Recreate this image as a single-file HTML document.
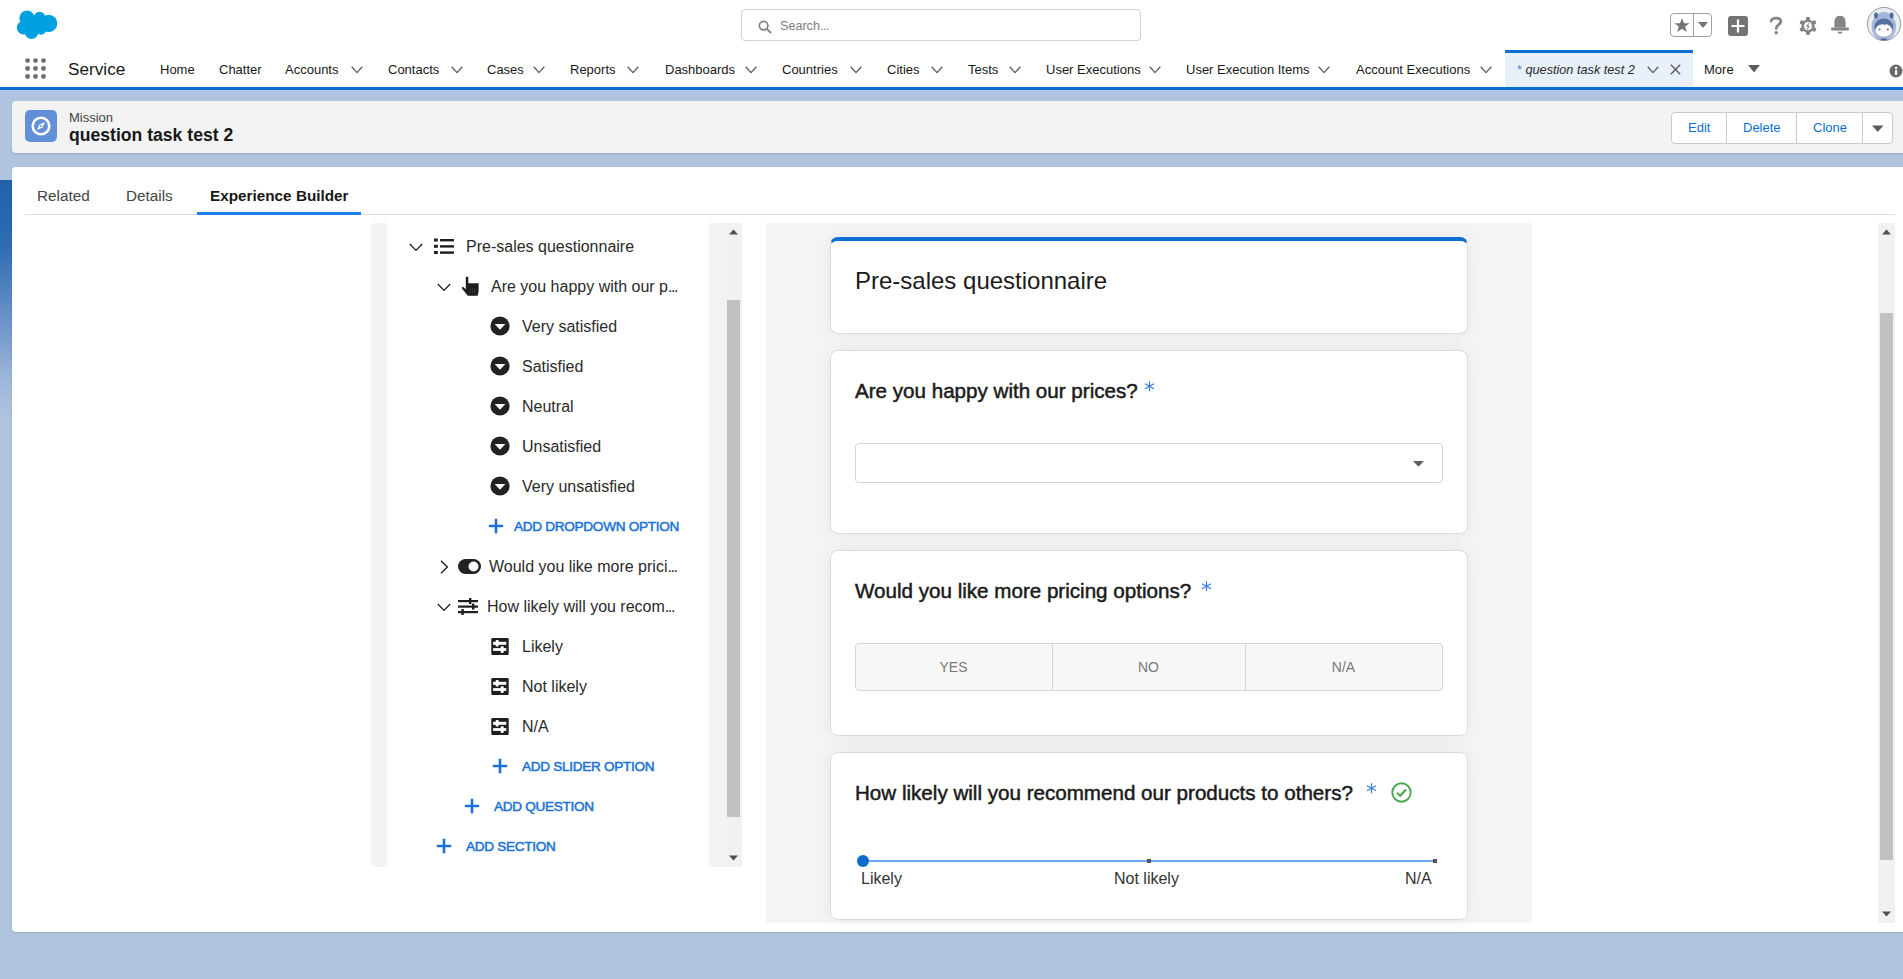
<!DOCTYPE html>
<html><head><meta charset="utf-8">
<style>
*{box-sizing:border-box;margin:0;padding:0}
html,body{width:1903px;height:979px;overflow:hidden}
body{position:relative;background:#b0c4df;font-family:"Liberation Sans",sans-serif;color:#181818}
.a{position:absolute;white-space:nowrap}
#hdr{position:absolute;left:0;top:0;width:1903px;height:87px;background:#fff}
#bline{position:absolute;left:0;top:87px;width:1903px;height:3px;background:#0b6fd4}
#leftimg{position:absolute;left:0;top:180px;width:40px;height:240px;background:linear-gradient(#2261a9 0%,#2f6cb2 28%,#6a92c8 58%,#9bb5d9 82%,#b0c4df 100%)}
.nav{position:absolute;top:61px;font-size:13px;color:#181818;line-height:18px}
.chev{position:absolute;top:66px}
#rec{position:absolute;left:12px;top:101px;width:1900px;height:52px;background:#f3f3f3;border-radius:4px;box-shadow:0 1px 2px rgba(0,0,0,.12)}
#main{position:absolute;left:12px;top:167px;width:1900px;height:765px;background:#fff;border-radius:4px 4px 4px 4px;box-shadow:0 1px 2px rgba(0,0,0,.12)}
.tab{position:absolute;top:186px;font-size:15.3px;line-height:20px;color:#444}
.tr{position:absolute;font-size:16px;color:#2a2a2a;line-height:22px}
.add{position:absolute;padding-top:1px;font-size:13.6px;letter-spacing:-0.3px;color:#1a73d4;line-height:18px;-webkit-text-stroke:0.5px #1a73d4}
.card{position:absolute;left:830px;width:638px;background:#fff;border:1px solid #dcdcdc;border-radius:8px}
.q{position:absolute;left:855px;font-size:20.6px;color:#1b1b1b;line-height:24px;-webkit-text-stroke:0.5px #1b1b1b}
.ast{color:#3577d8;font-weight:normal;font-size:20px}
</style></head><body>
<div id="hdr"></div>
<div id="bline"></div>
<div id="leftimg"></div>

<!-- logo -->
<svg class="a" style="left:0;top:0" width="70" height="45" viewBox="0 0 70 45"><g fill="#00a1e0">
<circle cx="27" cy="18.2" r="7.6"/><circle cx="39.5" cy="17.6" r="5.9"/><circle cx="48.7" cy="23.4" r="8.6"/><circle cx="23.6" cy="27.6" r="6.8"/><circle cx="31.5" cy="32.1" r="6.8"/><circle cx="41" cy="29.2" r="5.5"/><ellipse cx="36" cy="25" rx="13" ry="8"/>
</g></svg>

<!-- search -->
<div class="a" style="left:741px;top:9px;width:400px;height:32px;border:1px solid #d2d2d2;border-radius:4px;background:#fff"></div>
<svg class="a" style="left:758px;top:20px" width="14" height="14" viewBox="0 0 14 14"><circle cx="5.6" cy="5.6" r="4.3" fill="none" stroke="#808080" stroke-width="1.7"/><path d="M8.8 8.8 L13 13" stroke="#808080" stroke-width="1.9"/></svg>
<div class="a" style="left:780px;top:17px;font-size:12.6px;color:#7d7d7d;line-height:18px">Search<span style="letter-spacing:-0.6px">...</span></div>

<!-- header right icons -->
<div class="a" style="left:1670px;top:13px;width:42px;height:24px;border:1px solid #a0a0a0;border-radius:4px;background:#fff"></div>
<div class="a" style="left:1693px;top:13px;width:1px;height:24px;background:#a0a0a0"></div>
<svg class="a" style="left:1674px;top:17px" width="16" height="16" viewBox="0 0 16 16"><path d="M8 1 L10 6.2 L15.5 6.3 L11.2 9.6 L12.8 15 L8 11.8 L3.2 15 L4.8 9.6 L0.5 6.3 L6 6.2 Z" fill="#747474"/></svg>
<svg class="a" style="left:1698px;top:22px" width="10" height="6" viewBox="0 0 10 6"><path d="M0 0 L10 0 L5 6 Z" fill="#747474"/></svg>
<div class="a" style="left:1728px;top:16px;width:20px;height:20px;border-radius:3px;background:#747474"></div>
<svg class="a" style="left:1728px;top:16px" width="20" height="20" viewBox="0 0 20 20"><path d="M10 3.5 V16.5 M3.5 10 H16.5" stroke="#fff" stroke-width="2.2"/></svg>
<svg class="a" style="left:1768px;top:15px" width="16" height="20" viewBox="0 0 16 20"><path d="M3.2 6.2 C3.2 2.4 12.8 1.6 12.8 6.4 C12.8 9.6 8.2 9.8 8.2 13.6" fill="none" stroke="#858585" stroke-width="2.8" stroke-linecap="round"/><rect x="6.6" y="16.2" width="3.2" height="3" rx="0.8" fill="#858585"/></svg>
<svg class="a" style="left:1799px;top:17px" width="18" height="18" viewBox="0 0 18 18"><g fill="#858585"><rect x="7" y="0" width="4" height="4" rx="1.4" transform="rotate(0 9 9)"/><rect x="7" y="0" width="4" height="4" rx="1.4" transform="rotate(60 9 9)"/><rect x="7" y="0" width="4" height="4" rx="1.4" transform="rotate(120 9 9)"/><rect x="7" y="0" width="4" height="4" rx="1.4" transform="rotate(180 9 9)"/><rect x="7" y="0" width="4" height="4" rx="1.4" transform="rotate(240 9 9)"/><rect x="7" y="0" width="4" height="4" rx="1.4" transform="rotate(300 9 9)"/><circle cx="9" cy="9" r="6.6"/></g><circle cx="9" cy="9" r="3.9" fill="#fff"/><path d="M9.9 6.3 L7.9 9.3 H9.8 L8.4 11.9" fill="none" stroke="#858585" stroke-width="1.1"/></svg>
<svg class="a" style="left:1830px;top:15px" width="20" height="20" viewBox="0 0 20 20"><path d="M10 0.8 C5.6 0.8 4.4 4.2 4.4 8.2 V12.6 H15.6 V8.2 C15.6 4.2 14.4 0.8 10 0.8 Z" fill="#858585"/><rect x="1" y="12.6" width="18" height="2.8" rx="1.2" fill="#858585"/><path d="M7.6 16.8 H12.4 A2.4 2 0 0 1 7.6 16.8 Z" fill="#858585"/></svg>
<svg class="a" style="left:1867px;top:7px" width="34" height="34" viewBox="0 0 34 34"><defs><clipPath id="avc"><circle cx="17" cy="17" r="16.6"/></clipPath></defs><circle cx="17" cy="17" r="16.6" fill="#e9edf4"/><g clip-path="url(#avc)"><ellipse cx="16.8" cy="19.5" rx="12.2" ry="14.5" fill="#a4b7d6"/><ellipse cx="9" cy="8.6" rx="1.9" ry="3" fill="#51699a"/><ellipse cx="24.6" cy="8.6" rx="1.9" ry="3" fill="#51699a"/><ellipse cx="16.8" cy="20" rx="9.4" ry="8.4" fill="#5470a0"/><ellipse cx="16.8" cy="23.2" rx="8.3" ry="6.4" fill="#fff"/><path d="M8.6 20 Q10 15 13 16 L14 18.6 L15.6 15.8 L17.2 18.4 Q21 15 25 19.5 L25 17 Q20 11 12 14 Z" fill="#5470a0"/><circle cx="12.6" cy="22.6" r="1" fill="#5470a0"/><circle cx="20.8" cy="22.6" r="1" fill="#5470a0"/><ellipse cx="16.8" cy="33.2" rx="3.4" ry="2" fill="#51699a"/></g><circle cx="17" cy="17" r="16.6" fill="none" stroke="#8e8e8e" stroke-width="0.9"/></svg>

<!-- app launcher + Service -->
<svg class="a" style="left:25px;top:58px" width="22" height="22" viewBox="0 0 22 22"><g fill="#706e6b"><circle cx="2.6" cy="2.6" r="2.4"/><circle cx="10.5" cy="2.6" r="2.4"/><circle cx="18.5" cy="2.6" r="2.4"/><circle cx="2.6" cy="10.5" r="2.4"/><circle cx="10.5" cy="10.5" r="2.4"/><circle cx="18.5" cy="10.5" r="2.4"/><circle cx="2.6" cy="18.5" r="2.4"/><circle cx="10.5" cy="18.5" r="2.4"/><circle cx="18.5" cy="18.5" r="2.4"/></g></svg>
<div class="a" style="left:68px;top:58px;font-size:17.2px;line-height:22px;color:#181818">Service</div>

<!-- NAV -->
<div class="nav" style="left:160px">Home</div>
<div class="nav" style="left:219px">Chatter</div>
<div class="nav" style="left:285px">Accounts</div>
<svg class="chev" style="left:351px" width="12" height="8" viewBox="0 0 12 8"><path d="M0.7 0.8 L6 6.6 L11.3 0.8" fill="none" stroke="#5c5c5c" stroke-width="1.3"/></svg>
<div class="nav" style="left:388px">Contacts</div>
<svg class="chev" style="left:451px" width="12" height="8" viewBox="0 0 12 8"><path d="M0.7 0.8 L6 6.6 L11.3 0.8" fill="none" stroke="#5c5c5c" stroke-width="1.3"/></svg>
<div class="nav" style="left:487px">Cases</div>
<svg class="chev" style="left:533px" width="12" height="8" viewBox="0 0 12 8"><path d="M0.7 0.8 L6 6.6 L11.3 0.8" fill="none" stroke="#5c5c5c" stroke-width="1.3"/></svg>
<div class="nav" style="left:570px">Reports</div>
<svg class="chev" style="left:627px" width="12" height="8" viewBox="0 0 12 8"><path d="M0.7 0.8 L6 6.6 L11.3 0.8" fill="none" stroke="#5c5c5c" stroke-width="1.3"/></svg>
<div class="nav" style="left:665px">Dashboards</div>
<svg class="chev" style="left:745px" width="12" height="8" viewBox="0 0 12 8"><path d="M0.7 0.8 L6 6.6 L11.3 0.8" fill="none" stroke="#5c5c5c" stroke-width="1.3"/></svg>
<div class="nav" style="left:782px">Countries</div>
<svg class="chev" style="left:850px" width="12" height="8" viewBox="0 0 12 8"><path d="M0.7 0.8 L6 6.6 L11.3 0.8" fill="none" stroke="#5c5c5c" stroke-width="1.3"/></svg>
<div class="nav" style="left:887px">Cities</div>
<svg class="chev" style="left:931px" width="12" height="8" viewBox="0 0 12 8"><path d="M0.7 0.8 L6 6.6 L11.3 0.8" fill="none" stroke="#5c5c5c" stroke-width="1.3"/></svg>
<div class="nav" style="left:968px">Tests</div>
<svg class="chev" style="left:1009px" width="12" height="8" viewBox="0 0 12 8"><path d="M0.7 0.8 L6 6.6 L11.3 0.8" fill="none" stroke="#5c5c5c" stroke-width="1.3"/></svg>
<div class="nav" style="left:1046px">User Executions</div>
<svg class="chev" style="left:1149px" width="12" height="8" viewBox="0 0 12 8"><path d="M0.7 0.8 L6 6.6 L11.3 0.8" fill="none" stroke="#5c5c5c" stroke-width="1.3"/></svg>
<div class="nav" style="left:1186px">User Execution Items</div>
<svg class="chev" style="left:1318px" width="12" height="8" viewBox="0 0 12 8"><path d="M0.7 0.8 L6 6.6 L11.3 0.8" fill="none" stroke="#5c5c5c" stroke-width="1.3"/></svg>
<div class="nav" style="left:1356px">Account Executions</div>
<svg class="chev" style="left:1480px" width="12" height="8" viewBox="0 0 12 8"><path d="M0.7 0.8 L6 6.6 L11.3 0.8" fill="none" stroke="#5c5c5c" stroke-width="1.3"/></svg>
<!--NAVEND-->
<!-- active tab -->
<div class="a" style="left:1505px;top:50px;width:188px;height:37px;background:#e8f0fa;border-top:3px solid #0b6fd4"></div>
<div class="a" style="left:1517px;top:61px;font-size:12.7px;line-height:18px;color:#2b2b2b;font-style:italic"><span style="color:#3c8ee6;font-style:normal">*</span> question task test 2</div>
<svg class="a" style="left:1647px;top:66px" width="12" height="8" viewBox="0 0 12 8"><path d="M0.7 0.8 L6 6.6 L11.3 0.8" fill="none" stroke="#5c5c5c" stroke-width="1.3"/></svg>
<svg class="a" style="left:1670px;top:64px" width="11" height="11" viewBox="0 0 11 11"><path d="M0.8 0.8 L10.2 10.2 M10.2 0.8 L0.8 10.2" stroke="#5c5c5c" stroke-width="1.4"/></svg>
<div class="nav" style="left:1704px">More</div>
<svg class="a" style="left:1748px;top:65px" width="12" height="8" viewBox="0 0 12 8"><path d="M0 0 H12 L6 7.5 Z" fill="#5c5c5c"/></svg>
<svg class="a" style="left:1889px;top:64px" width="14" height="14" viewBox="0 0 14 14"><circle cx="7" cy="7" r="6.5" fill="#6b6b6b"/><rect x="6" y="6" width="2.2" height="5" fill="#fff"/><circle cx="7.1" cy="3.9" r="1.2" fill="#fff"/></svg>

<!-- record header -->
<div id="rec"></div>
<div class="a" style="left:25px;top:110px;width:32px;height:32px;border-radius:5px;background:#6190d8"></div>
<svg class="a" style="left:25px;top:110px" width="32" height="32" viewBox="0 0 32 32"><circle cx="16" cy="16" r="8.3" fill="none" stroke="#fff" stroke-width="2.6"/><path d="M20 12 L17.6 17.6 L12 20 L14.4 14.4 Z" fill="#fff"/><circle cx="16" cy="16" r="1" fill="#6190d8"/></svg>
<div class="a" style="left:69px;top:110px;font-size:13px;line-height:16px;color:#444">Mission</div>
<div class="a" style="left:69px;top:124px;font-size:17.6px;line-height:22px;color:#181818;font-weight:bold">question task test 2</div>
<div class="a" style="left:1671px;top:112px;width:222px;height:32px;border:1px solid #c9c9c9;border-radius:4px;background:#fff"></div>
<div class="a" style="left:1726px;top:113px;width:1px;height:30px;background:#c9c9c9"></div>
<div class="a" style="left:1796px;top:113px;width:1px;height:30px;background:#c9c9c9"></div>
<div class="a" style="left:1862px;top:113px;width:1px;height:30px;background:#c9c9c9"></div>
<div class="a" style="left:1688px;top:119px;font-size:13px;line-height:18px;color:#0b6fd4">Edit</div>
<div class="a" style="left:1743px;top:119px;font-size:13px;line-height:18px;color:#0b6fd4">Delete</div>
<div class="a" style="left:1813px;top:119px;font-size:13px;line-height:18px;color:#0b6fd4">Clone</div>
<svg class="a" style="left:1872px;top:125px" width="12" height="8" viewBox="0 0 12 8"><path d="M0 0.5 H11.5 L5.75 7 Z" fill="#5c5c5c"/></svg>

<!-- main card -->
<div id="main"></div>
<div class="tab" style="left:37px">Related</div>
<div class="tab" style="left:126px">Details</div>
<div class="tab" style="left:210px;font-weight:bold;color:#181818">Experience Builder</div>
<div class="a" style="left:25px;top:214px;width:1870px;height:1px;background:#dddbda"></div>
<div class="a" style="left:197px;top:212px;width:164px;height:3px;background:#1b80e8"></div>
<!--MAINEND-->
<!-- TREE -->
<div class="a" style="left:371px;top:223px;width:371px;height:644px;background:#f3f3f3;border-radius:4px 0 0 4px"></div>
<div class="a" style="left:387px;top:223px;width:322px;height:644px;background:#fff"></div>
<div class="a" style="left:725px;top:223px;width:17px;height:644px;background:#f1f1f1"></div>
<div class="a" style="left:727px;top:300px;width:13px;height:517px;background:#c1c1c1"></div>
<svg class="a" style="left:729px;top:229px" width="9" height="6" viewBox="0 0 9 6"><path d="M0 5.5 H9 L4.5 0.5 Z" fill="#505050"/></svg>
<svg class="a" style="left:729px;top:855px" width="9" height="6" viewBox="0 0 9 6"><path d="M0 0.5 H9 L4.5 5.5 Z" fill="#505050"/></svg>
<svg class="a" style="left:409px;top:243px" width="14" height="9" viewBox="0 0 14 9"><path d="M0.8 1 L7 7.4 L13.2 1" fill="none" stroke="#1e1e1e" stroke-width="1.35"/></svg>
<svg class="a" style="left:434px;top:238px" width="20" height="17" viewBox="0 0 20 17"><g fill="#1e1e1e"><rect x="0" y="0.5" width="3.8" height="3"/><rect x="0" y="6.8" width="3.8" height="3"/><rect x="0" y="13" width="3.8" height="3"/><rect x="6" y="1" width="14" height="2.4"/><rect x="6" y="7.2" width="14" height="2.4"/><rect x="6" y="13.4" width="14" height="2.4"/></g></svg>
<div class="tr" style="left:466px;top:236px">Pre-sales questionnaire</div>
<svg class="a" style="left:437px;top:283px" width="14" height="9" viewBox="0 0 14 9"><path d="M0.8 1 L7 7.4 L13.2 1" fill="none" stroke="#1e1e1e" stroke-width="1.35"/></svg>
<svg class="a" style="left:461px;top:276px" width="19" height="21" viewBox="0 0 19 21"><path d="M4.8 1.2 Q6 0 7.3 1.2 V7.2 H17.6 V15.5 L16.6 19.8 H6.8 L0.6 12 Q1.2 10.6 2.6 11.2 L4.8 13.2 Z" fill="#1e1e1e"/><path d="M9.2 12 V17.5 M11.4 12 V17.5 M13.6 12 V17.5" stroke="#3a3a3a" stroke-width="0.7"/><path d="M10 7.2 V6.5 M12.3 7.2 V6.8" stroke="#fff" stroke-width="0.9"/></svg>
<div class="tr" style="left:491px;top:276px">Are you happy with our p<span style="letter-spacing:-1.4px">...</span></div>
<svg class="a" style="left:490px;top:316px" width="20" height="20" viewBox="0 0 20 20"><circle cx="10" cy="10" r="9.6" fill="#222"/><path d="M4.6 8 H15.4 L10 13.8 Z" fill="#fff"/></svg>
<div class="tr" style="left:522px;top:316px">Very satisfied</div>
<svg class="a" style="left:490px;top:356px" width="20" height="20" viewBox="0 0 20 20"><circle cx="10" cy="10" r="9.6" fill="#222"/><path d="M4.6 8 H15.4 L10 13.8 Z" fill="#fff"/></svg>
<div class="tr" style="left:522px;top:356px">Satisfied</div>
<svg class="a" style="left:490px;top:396px" width="20" height="20" viewBox="0 0 20 20"><circle cx="10" cy="10" r="9.6" fill="#222"/><path d="M4.6 8 H15.4 L10 13.8 Z" fill="#fff"/></svg>
<div class="tr" style="left:522px;top:396px">Neutral</div>
<svg class="a" style="left:490px;top:436px" width="20" height="20" viewBox="0 0 20 20"><circle cx="10" cy="10" r="9.6" fill="#222"/><path d="M4.6 8 H15.4 L10 13.8 Z" fill="#fff"/></svg>
<div class="tr" style="left:522px;top:436px">Unsatisfied</div>
<svg class="a" style="left:490px;top:476px" width="20" height="20" viewBox="0 0 20 20"><circle cx="10" cy="10" r="9.6" fill="#222"/><path d="M4.6 8 H15.4 L10 13.8 Z" fill="#fff"/></svg>
<div class="tr" style="left:522px;top:476px">Very unsatisfied</div>
<svg class="a" style="left:488px;top:518px" width="16" height="16" viewBox="0 0 16 16"><path d="M8 0.8 V15.2 M0.8 8 H15.2" stroke="#1a73d4" stroke-width="2.6"/></svg>
<div class="add" style="left:514px;top:517px">ADD DROPDOWN OPTION</div>
<svg class="a" style="left:440px;top:560px" width="9" height="14" viewBox="0 0 9 14"><path d="M1 0.8 L7.4 7 L1 13.2" fill="none" stroke="#1e1e1e" stroke-width="1.35"/></svg>
<svg class="a" style="left:458px;top:559px" width="23" height="15" viewBox="0 0 23 15"><rect x="0" y="0" width="23" height="15" rx="7.5" fill="#222"/><circle cx="15.5" cy="7.5" r="5" fill="#fff"/></svg>
<div class="tr" style="left:489px;top:556px">Would you like more prici<span style="letter-spacing:-1.4px">...</span></div>
<svg class="a" style="left:437px;top:603px" width="14" height="9" viewBox="0 0 14 9"><path d="M0.8 1 L7 7.4 L13.2 1" fill="none" stroke="#1e1e1e" stroke-width="1.35"/></svg>
<svg class="a" style="left:458px;top:598px" width="20" height="17" viewBox="0 0 20 17"><g fill="#1e1e1e"><rect x="0" y="2" width="20" height="2.2"/><rect x="0" y="7.5" width="20" height="2.2"/><rect x="0" y="13" width="20" height="2.2"/><rect x="11" y="0" width="2.4" height="6"/><rect x="14" y="5.6" width="2.4" height="6"/><rect x="3.4" y="11" width="2.4" height="6"/></g></svg>
<div class="tr" style="left:487px;top:596px">How likely will you recom<span style="letter-spacing:-1.4px">...</span></div>
<svg class="a" style="left:491px;top:638px" width="18" height="17" viewBox="0 0 18 17"><rect x="0.3" y="0" width="17.4" height="17" rx="1.2" fill="#1e1e1e"/><g fill="#fff"><rect x="2.1" y="3.8" width="13.2" height="3"/><rect x="4.7" y="2" width="3" height="6.5" rx="0.8"/><rect x="2.1" y="10.1" width="13.2" height="2.8"/><rect x="9.7" y="8.3" width="3" height="6.6" rx="0.8"/></g></svg>
<div class="tr" style="left:522px;top:636px">Likely</div>
<svg class="a" style="left:491px;top:678px" width="18" height="17" viewBox="0 0 18 17"><rect x="0.3" y="0" width="17.4" height="17" rx="1.2" fill="#1e1e1e"/><g fill="#fff"><rect x="2.1" y="3.8" width="13.2" height="3"/><rect x="4.7" y="2" width="3" height="6.5" rx="0.8"/><rect x="2.1" y="10.1" width="13.2" height="2.8"/><rect x="9.7" y="8.3" width="3" height="6.6" rx="0.8"/></g></svg>
<div class="tr" style="left:522px;top:676px">Not likely</div>
<svg class="a" style="left:491px;top:718px" width="18" height="17" viewBox="0 0 18 17"><rect x="0.3" y="0" width="17.4" height="17" rx="1.2" fill="#1e1e1e"/><g fill="#fff"><rect x="2.1" y="3.8" width="13.2" height="3"/><rect x="4.7" y="2" width="3" height="6.5" rx="0.8"/><rect x="2.1" y="10.1" width="13.2" height="2.8"/><rect x="9.7" y="8.3" width="3" height="6.6" rx="0.8"/></g></svg>
<div class="tr" style="left:522px;top:716px">N/A</div>
<svg class="a" style="left:492px;top:758px" width="16" height="16" viewBox="0 0 16 16"><path d="M8 0.8 V15.2 M0.8 8 H15.2" stroke="#1a73d4" stroke-width="2.6"/></svg>
<div class="add" style="left:522px;top:757px">ADD SLIDER OPTION</div>
<svg class="a" style="left:464px;top:798px" width="16" height="16" viewBox="0 0 16 16"><path d="M8 0.8 V15.2 M0.8 8 H15.2" stroke="#1a73d4" stroke-width="2.6"/></svg>
<div class="add" style="left:494px;top:797px">ADD QUESTION</div>
<svg class="a" style="left:436px;top:838px" width="16" height="16" viewBox="0 0 16 16"><path d="M8 0.8 V15.2 M0.8 8 H15.2" stroke="#1a73d4" stroke-width="2.6"/></svg>
<div class="add" style="left:466px;top:837px">ADD SECTION</div>
<!--TREEEND-->
<!-- PREVIEW -->
<div class="a" style="left:766px;top:223px;width:766px;height:700px;background:#f4f4f4"></div>
<div class="card" style="top:237px;height:97px;border-top:4px solid #0b6fd4;box-shadow:0 0 18px rgba(0,0,0,.05)"></div>
<div class="a" style="left:855px;top:267px;font-size:24px;line-height:28px;color:#1b1b1b">Pre-sales questionnaire</div>

<div class="card" style="top:350px;height:184px;box-shadow:0 0 18px rgba(0,0,0,.05)"></div>
<div class="q" style="top:379px">Are you happy with our prices?</div><svg class="a" style="left:1144px;top:381px" width="11" height="11" viewBox="0 0 11 11"><path d="M5.5 0.3 V10.2 M1 2.8 L10 7.8 M10 2.8 L1 7.8" stroke="#3b7be0" stroke-width="1.2"/></svg>
<div class="a" style="left:855px;top:443px;width:588px;height:40px;border:1px solid #d6d6d6;border-radius:4px;background:#fff"></div>
<svg class="a" style="left:1412px;top:460px" width="13" height="8" viewBox="0 0 13 8"><path d="M1 1 H12 L6.5 6.8 Z" fill="#606060"/></svg>

<div class="card" style="top:550px;height:186px;box-shadow:0 0 18px rgba(0,0,0,.05)"></div>
<div class="q" style="top:579px">Would you like more pricing options?</div><svg class="a" style="left:1201px;top:581px" width="11" height="11" viewBox="0 0 11 11"><path d="M5.5 0.3 V10.2 M1 2.8 L10 7.8 M10 2.8 L1 7.8" stroke="#3b7be0" stroke-width="1.2"/></svg>
<div class="a" style="left:855px;top:643px;width:588px;height:48px;border:1px solid #d6d6d6;border-radius:4px;background:#f7f7f7"></div>
<div class="a" style="left:1052px;top:644px;width:1px;height:46px;background:#d6d6d6"></div>
<div class="a" style="left:1245px;top:644px;width:1px;height:46px;background:#d6d6d6"></div>
<div class="a" style="left:855px;top:658px;width:197px;text-align:center;font-size:14px;line-height:18px;color:#7a7a7a">YES</div>
<div class="a" style="left:1052px;top:658px;width:193px;text-align:center;font-size:14px;line-height:18px;color:#7a7a7a">NO</div>
<div class="a" style="left:1245px;top:658px;width:197px;text-align:center;font-size:14px;line-height:18px;color:#7a7a7a">N/A</div>

<div class="card" style="top:752px;height:168px;box-shadow:0 0 18px rgba(0,0,0,.05)"></div>
<div class="q" style="top:781px">How likely will you recommend our products to others?</div><svg class="a" style="left:1366px;top:783px" width="11" height="11" viewBox="0 0 11 11"><path d="M5.5 0.3 V10.2 M1 2.8 L10 7.8 M10 2.8 L1 7.8" stroke="#3b7be0" stroke-width="1.2"/></svg>
<svg class="a" style="left:1391px;top:782px" width="21" height="21" viewBox="0 0 21 21"><circle cx="10.5" cy="10.5" r="9.2" fill="none" stroke="#4aaa4e" stroke-width="1.9"/><path d="M6 10.8 L9.2 13.8 L15 7.5" fill="none" stroke="#4aaa4e" stroke-width="2"/></svg>
<div class="a" style="left:863px;top:860px;width:572px;height:2px;background:#6aa6f0"></div>
<div class="a" style="left:857px;top:855px;width:12px;height:12px;border-radius:50%;background:#0b6cd0"></div>
<div class="a" style="left:1147px;top:859px;width:4px;height:4px;background:#555"></div>
<div class="a" style="left:1433px;top:859px;width:4px;height:4px;background:#555"></div>
<div class="a" style="left:861px;top:869px;font-size:16px;line-height:20px;color:#333">Likely</div>
<div class="a" style="left:1114px;top:869px;font-size:16px;line-height:20px;color:#333">Not likely</div>
<div class="a" style="left:1405px;top:869px;font-size:16px;line-height:20px;color:#333">N/A</div>

<!-- right scrollbar -->
<div class="a" style="left:1878px;top:223px;width:17px;height:700px;background:#f1f1f1"></div>
<div class="a" style="left:1880px;top:313px;width:13px;height:547px;background:#c1c1c1"></div>
<svg class="a" style="left:1882px;top:229px" width="9" height="6" viewBox="0 0 9 6"><path d="M0 5.5 H9 L4.5 0.5 Z" fill="#505050"/></svg>
<svg class="a" style="left:1882px;top:911px" width="9" height="6" viewBox="0 0 9 6"><path d="M0 0.5 H9 L4.5 5.5 Z" fill="#505050"/></svg>


</body></html>
